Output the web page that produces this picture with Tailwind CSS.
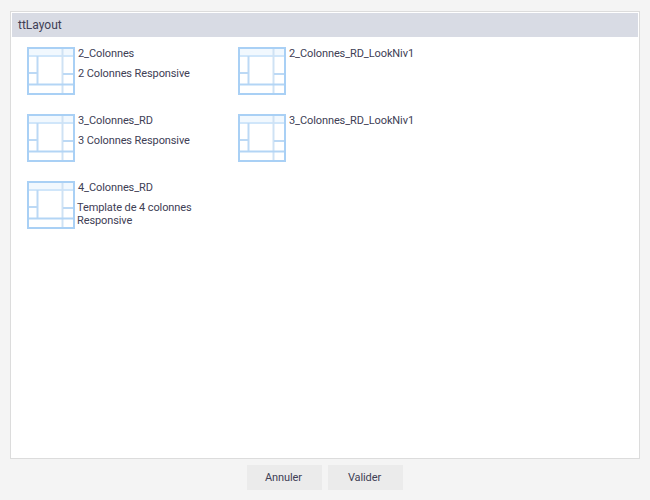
<!DOCTYPE html>
<html lang="en">
  <head>
    <meta charset="UTF-8" />
    <title>ttLayout</title>
    <script src="https://cdn.jsdelivr.net/npm/@tailwindcss/browser@4"></script>
  </head>
  <body class="bg-[#f4f4f4] font-['Roboto',sans-serif] text-[11px] tracking-[-0.1px] text-[#404055]">
    <div class="flex h-[500px] w-[650px] flex-col px-[10px] pt-[11px]">
      <div class="h-[448px] border border-[#dcdcdc] bg-white p-px">
        <div class="flex h-[24px] items-center bg-[#d8dbe4] pl-[6px] pb-px text-[12px] tracking-normal">ttLayout</div>

        <div class="grid grid-cols-[211px_211px] pl-[15px] pt-[10px]">
          <div class="flex h-[67px] gap-[3px]">
            <svg class="h-[48px] w-[48px] shrink-0" viewBox="0 0 48 48" fill="none">
              <rect x="2" y="2" width="44" height="6" fill="#f1f8fe" />
              <path d="M2 9h44" stroke="#d0e6fa" stroke-width="2" />
              <path d="M35.5 2v44" stroke="#cfe2f4" stroke-width="2" />
              <path d="M10.5 9v29" stroke="#bcd9f5" stroke-width="2" />
              <path d="M1 37.5h46" stroke="#b3d5f5" stroke-width="2" />
              <path d="M1 26h9M36 27h11" stroke="#bcd9f5" stroke-width="2" />
              <rect x="1" y="1" width="46" height="46" stroke="#a9d0f5" stroke-width="2" />
            </svg>
            <div class="-mt-px">
              <div class="leading-[16px]">2_Colonnes</div>
              <div class="mt-[4px] leading-[16px]">2 Colonnes Responsive</div>
            </div>
          </div>
          <div class="flex h-[67px] gap-[3px]">
            <svg class="h-[48px] w-[48px] shrink-0" viewBox="0 0 48 48" fill="none">
              <rect x="2" y="2" width="44" height="6" fill="#f1f8fe" />
              <path d="M2 9h44" stroke="#d0e6fa" stroke-width="2" />
              <path d="M35.5 2v44" stroke="#cfe2f4" stroke-width="2" />
              <path d="M10.5 9v29" stroke="#bcd9f5" stroke-width="2" />
              <path d="M1 37.5h46" stroke="#b3d5f5" stroke-width="2" />
              <path d="M1 26h9M36 27h11" stroke="#bcd9f5" stroke-width="2" />
              <rect x="1" y="1" width="46" height="46" stroke="#a9d0f5" stroke-width="2" />
            </svg>
            <div class="-mt-px leading-[16px]">2_Colonnes_RD_LookNiv1</div>
          </div>
          <div class="flex h-[67px] gap-[3px]">
            <svg class="h-[48px] w-[48px] shrink-0" viewBox="0 0 48 48" fill="none">
              <rect x="2" y="2" width="44" height="6" fill="#f1f8fe" />
              <path d="M2 9h44" stroke="#d0e6fa" stroke-width="2" />
              <path d="M35.5 2v44" stroke="#cfe2f4" stroke-width="2" />
              <path d="M10.5 9v29" stroke="#bcd9f5" stroke-width="2" />
              <path d="M1 37.5h46" stroke="#b3d5f5" stroke-width="2" />
              <path d="M1 26h9M36 27h11" stroke="#bcd9f5" stroke-width="2" />
              <rect x="1" y="1" width="46" height="46" stroke="#a9d0f5" stroke-width="2" />
            </svg>
            <div class="-mt-px">
              <div class="leading-[16px]">3_Colonnes_RD</div>
              <div class="mt-[4px] leading-[16px]">3 Colonnes Responsive</div>
            </div>
          </div>
          <div class="flex h-[67px] gap-[3px]">
            <svg class="h-[48px] w-[48px] shrink-0" viewBox="0 0 48 48" fill="none">
              <rect x="2" y="2" width="44" height="6" fill="#f1f8fe" />
              <path d="M2 9h44" stroke="#d0e6fa" stroke-width="2" />
              <path d="M35.5 2v44" stroke="#cfe2f4" stroke-width="2" />
              <path d="M10.5 9v29" stroke="#bcd9f5" stroke-width="2" />
              <path d="M1 37.5h46" stroke="#b3d5f5" stroke-width="2" />
              <path d="M1 26h9M36 27h11" stroke="#bcd9f5" stroke-width="2" />
              <rect x="1" y="1" width="46" height="46" stroke="#a9d0f5" stroke-width="2" />
            </svg>
            <div class="-mt-px leading-[16px]">3_Colonnes_RD_LookNiv1</div>
          </div>
          <div class="flex h-[67px] gap-[3px]">
            <svg class="h-[48px] w-[48px] shrink-0" viewBox="0 0 48 48" fill="none">
              <rect x="2" y="2" width="44" height="6" fill="#f1f8fe" />
              <path d="M2 9h44" stroke="#d0e6fa" stroke-width="2" />
              <path d="M35.5 2v44" stroke="#cfe2f4" stroke-width="2" />
              <path d="M10.5 9v29" stroke="#bcd9f5" stroke-width="2" />
              <path d="M1 37.5h46" stroke="#b3d5f5" stroke-width="2" />
              <path d="M1 26h9M36 27h11" stroke="#bcd9f5" stroke-width="2" />
              <rect x="1" y="1" width="46" height="46" stroke="#a9d0f5" stroke-width="2" />
            </svg>
            <div class="-mt-px">
              <div class="leading-[16px]">4_Colonnes_RD</div>
              <div class="mt-[5px] -ml-px w-[125px] leading-[13px]">Template de 4 colonnes Responsive</div>
            </div>
          </div>
        </div>
      </div>

      <div class="flex justify-center gap-[6px] pt-[6px]">
        <button class="h-[25px] w-[75px] bg-[#ebebeb] pt-px pr-[2px] text-center">Annuler</button>
        <button class="h-[25px] w-[75px] bg-[#ebebeb] pt-px pr-[2px] text-center">Valider</button>
      </div>
    </div>
  </body>
</html>
